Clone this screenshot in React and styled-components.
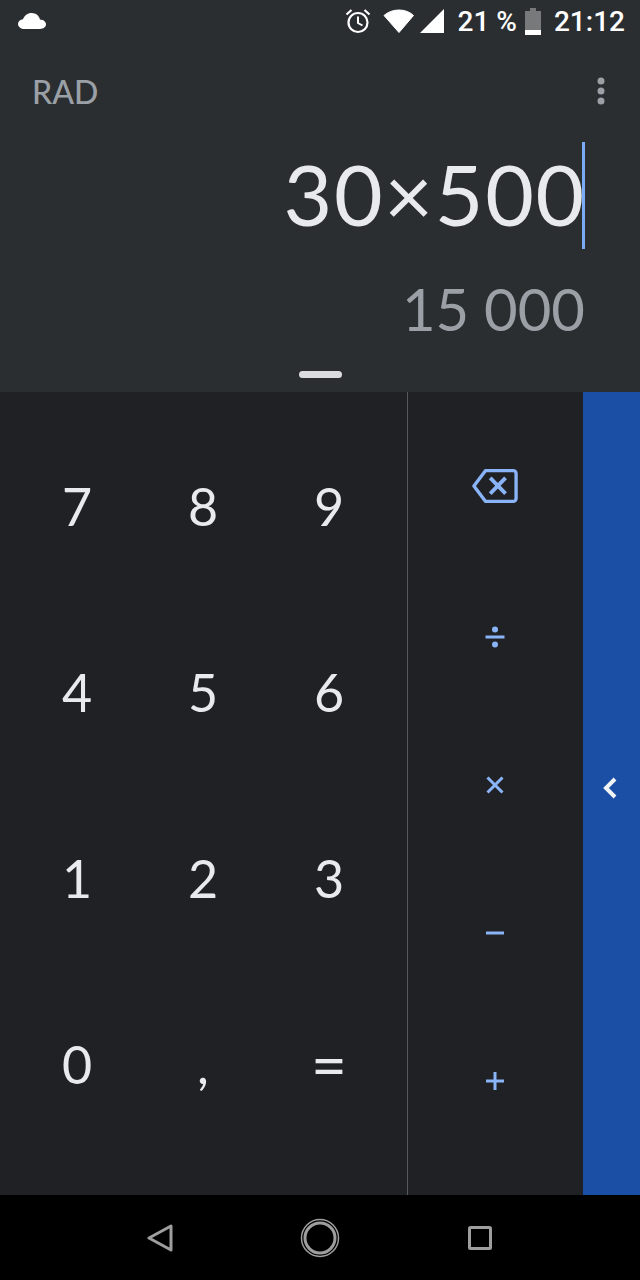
import React from "react"
import styled, { createGlobalStyle } from "styled-components"

const GlobalStyle = createGlobalStyle`
  html, body {
    margin: 0;
    padding: 0;
    background: #000;
  }
`

const Screen = styled.div`
  width: 640px;
  height: 1280px;
  display: flex;
  flex-direction: column;
  overflow: hidden;
  font-family: Lato, "Open Sans", sans-serif;
`

const Header = styled.div`
  height: 392px;
  flex-shrink: 0;
  display: flex;
  flex-direction: column;
  background-color: #2b2e31;
`

const StatusBar = styled.div`
  height: 42px;
  padding: 0 15px 0 18px;
  display: flex;
  align-items: center;
  color: #fff;
  font-family: Roboto, sans-serif;
  font-weight: 500;
  font-size: 28px;
`

const StatusRight = styled.div`
  margin-left: auto;
  display: flex;
  align-items: center;
`

const WifiIcon = styled.svg`
  margin-left: 12px;
`

const SignalIcon = styled.svg`
  margin-left: 5px;
`

const Percent = styled.span`
  margin: 0 8px 0 14px;
`

const Clock = styled.span`
  margin-left: 13px;
`

const ModeRow = styled.div`
  height: 50px;
  margin-top: 24px;
  padding: 0 35px 0 32px;
  display: flex;
  align-items: center;
  justify-content: space-between;
`

const Mode = styled.span`
  color: #9aa0a6;
  font-size: 32px;
  font-weight: 500;
`

const Formula = styled.div`
  height: 108px;
  margin-top: 24px;
  padding-right: 54px;
  display: flex;
  align-items: center;
  justify-content: flex-end;
`

const FormulaText = styled.span`
  position: relative;
  color: #e8eaed;
  font-size: 84px;
  line-height: 108px;
  letter-spacing: 1.7px;
`

const Cursor = styled.i`
  position: absolute;
  right: 1px;
  top: 2px;
  width: 3px;
  height: 107px;
  background-color: #7baaf7;
`

const Result = styled.div`
  height: 66px;
  margin-top: 28px;
  padding-right: 55px;
  text-align: right;
  color: #9aa0a6;
  font-size: 58px;
  line-height: 66px;
`

const Handle = styled.div`
  width: 43px;
  height: 7px;
  margin: 29px auto 0;
  border-radius: 4px;
  background-color: #dadce0;
`

const Keypad = styled.div`
  flex: 1;
  display: flex;
  background-color: #202124;
`

const Digits = styled.div`
  width: 408px;
  box-sizing: border-box;
  padding: 21px 15px 38px 14px;
  display: grid;
  grid-template-columns: repeat(3, 126px);
  grid-template-rows: repeat(4, 186px);
  border-right: 1px solid #55585c;
`

const Key = styled.div`
  display: flex;
  align-items: center;
  justify-content: center;
  color: #e8eaed;
  font-size: ${props => props.$size || 52}px;
`

const Operators = styled.div`
  width: 175px;
  box-sizing: border-box;
  padding: 17px 1px 0 0;
  display: grid;
  grid-template-rows: 154px repeat(4, 148px);
`

const Operator = styled.div`
  display: flex;
  align-items: center;
  justify-content: center;
`

const Drawer = styled.div`
  flex: 1;
  padding: 0 4px 12px 0;
  display: flex;
  align-items: center;
  justify-content: center;
  background-color: #1a4fa5;
`

const NavBar = styled.div`
  height: 85px;
  flex-shrink: 0;
  display: grid;
  grid-template-columns: 160px 160px 160px;
  justify-content: center;
  align-items: center;
  justify-items: center;
  background-color: #000;
`

const OP = "#8ab4f8"

const keys = ["7", "8", "9", "4", "5", "6", "1", "2", "3", "0", ",", "="]

const App = () => (
  <Screen>
    <GlobalStyle />
    <Header>
      <StatusBar>
        <svg width="28" height="16" viewBox="0 0 28 16">
          <path
            d="M6.5 16C2.9 16 0 13.6 0 10.9 0 8.4 2.2 6.5 5 6.2 6.3 2.6 9.500 0 13.600 0c4.300 0 7.600 2.800 8.300 6.400 3.400.2 6.100 2 6.100 4.900 0 2.700-2.700 4.700-6 4.700z"
            fill="#fff"
          />
        </svg>
        <StatusRight>
          <svg width="26" height="26" viewBox="0 0 26 26" fill="none" stroke="#fff">
            <circle cx="13" cy="14.500" r="9.500" strokeWidth="2.200" />
            <path d="M13 8.500v6.500l4.500 2.500" strokeWidth="2" />
            <path d="M1.500 6.500 6.500 2M24.500 6.500 19.500 2" strokeWidth="2.200" />
          </svg>
          <WifiIcon width="32" height="24" viewBox="0 0 32 24">
            <path
              d="M16 23.500 30.500 6.500C27 3 21.800 1 16 1S5 3 1 6.500z"
              fill="#fff"
              stroke="#fff"
              strokeLinejoin="round"
            />
          </WifiIcon>
          <SignalIcon width="24" height="24" viewBox="0 0 24 24">
            <path d="M0 24 24 0v24z" fill="#fff" />
          </SignalIcon>
          <Percent>21 %</Percent>
          <svg width="16" height="27" viewBox="0 0 16 27">
            <path d="M5 0h6v3h5v24H0V3h5z" fill="#77797b" />
            <path d="M0 22h16v5H0z" fill="#fff" />
          </svg>
          <Clock>21:12</Clock>
        </StatusRight>
      </StatusBar>
      <ModeRow>
        <Mode>RAD</Mode>
        <svg width="8" height="28" viewBox="0 0 8 28" fill="#9aa0a6">
          <circle cx="4" cy="4" r="3.500" />
          <circle cx="4" cy="14" r="3.500" />
          <circle cx="4" cy="24" r="3.500" />
        </svg>
      </ModeRow>
      <Formula>
        <FormulaText>
          30×500
          <Cursor />
        </FormulaText>
      </Formula>
      <Result>15 000</Result>
      <Handle />
    </Header>
    <Keypad>
      <Digits>
        {keys.map(k => (
          <Key key={k} $size={k === "=" ? 62 : 52}>
            {k}
          </Key>
        ))}
      </Digits>
      <Operators>
        <Operator>
          <svg width="46" height="36" viewBox="0 0 48 36" fill="none" stroke={OP} strokeWidth="3.500">
            <path
              d="M14 2h29a3 3 0 0 1 3 3v26a3 3 0 0 1-3 3H14L2 18z"
              strokeLinejoin="round"
            />
            <path d="M19 9.500 35 26M35 9.500 19 26" strokeWidth="4" />
          </svg>
        </Operator>
        <Operator>
          <svg width="20" height="22" viewBox="0 0 20 22" fill={OP}>
            <circle cx="10" cy="3.500" r="3" />
            <rect x="0.500" y="9.500" width="19" height="3" />
            <circle cx="10" cy="18.500" r="3" />
          </svg>
        </Operator>
        <Operator>
          <svg width="18" height="18" viewBox="0 0 18 18" stroke={OP} strokeWidth="3">
            <path d="M1.500 1.500 16.500 16.500M16.500 1.500 1.500 16.500" />
          </svg>
        </Operator>
        <Operator>
          <svg width="18" height="4" viewBox="0 0 18 4" fill={OP}>
            <rect width="18" height="3" y="0.500" />
          </svg>
        </Operator>
        <Operator>
          <svg width="18" height="18" viewBox="0 0 18 18" fill={OP}>
            <rect y="7.500" width="18" height="3" />
            <rect x="7.500" width="3" height="18" />
          </svg>
        </Operator>
      </Operators>
      <Drawer>
        <svg width="14" height="22" viewBox="0 0 14 22" fill="none" stroke="#f1f3f4" strokeWidth="4">
          <path d="M12 2 3 11l9 9" />
        </svg>
      </Drawer>
    </Keypad>
    <NavBar>
      <svg width="26" height="28" viewBox="0 0 26 28" fill="none" stroke="#9e9e9e" strokeWidth="3" strokeLinejoin="round">
        <path d="M24 2v24L2 14z" />
      </svg>
      <svg width="40" height="40" viewBox="0 0 40 40" fill="none" stroke="#9e9e9e">
        <circle cx="20" cy="20" r="18.500" strokeWidth="1.500" />
        <circle cx="20" cy="20" r="15" strokeWidth="3" />
      </svg>
      <svg width="24" height="24" viewBox="0 0 24 24" fill="none" stroke="#9e9e9e" strokeWidth="3" strokeLinejoin="round">
        <rect x="1.500" y="1.500" width="21" height="21" rx="1" />
      </svg>
    </NavBar>
  </Screen>
)

export default App
